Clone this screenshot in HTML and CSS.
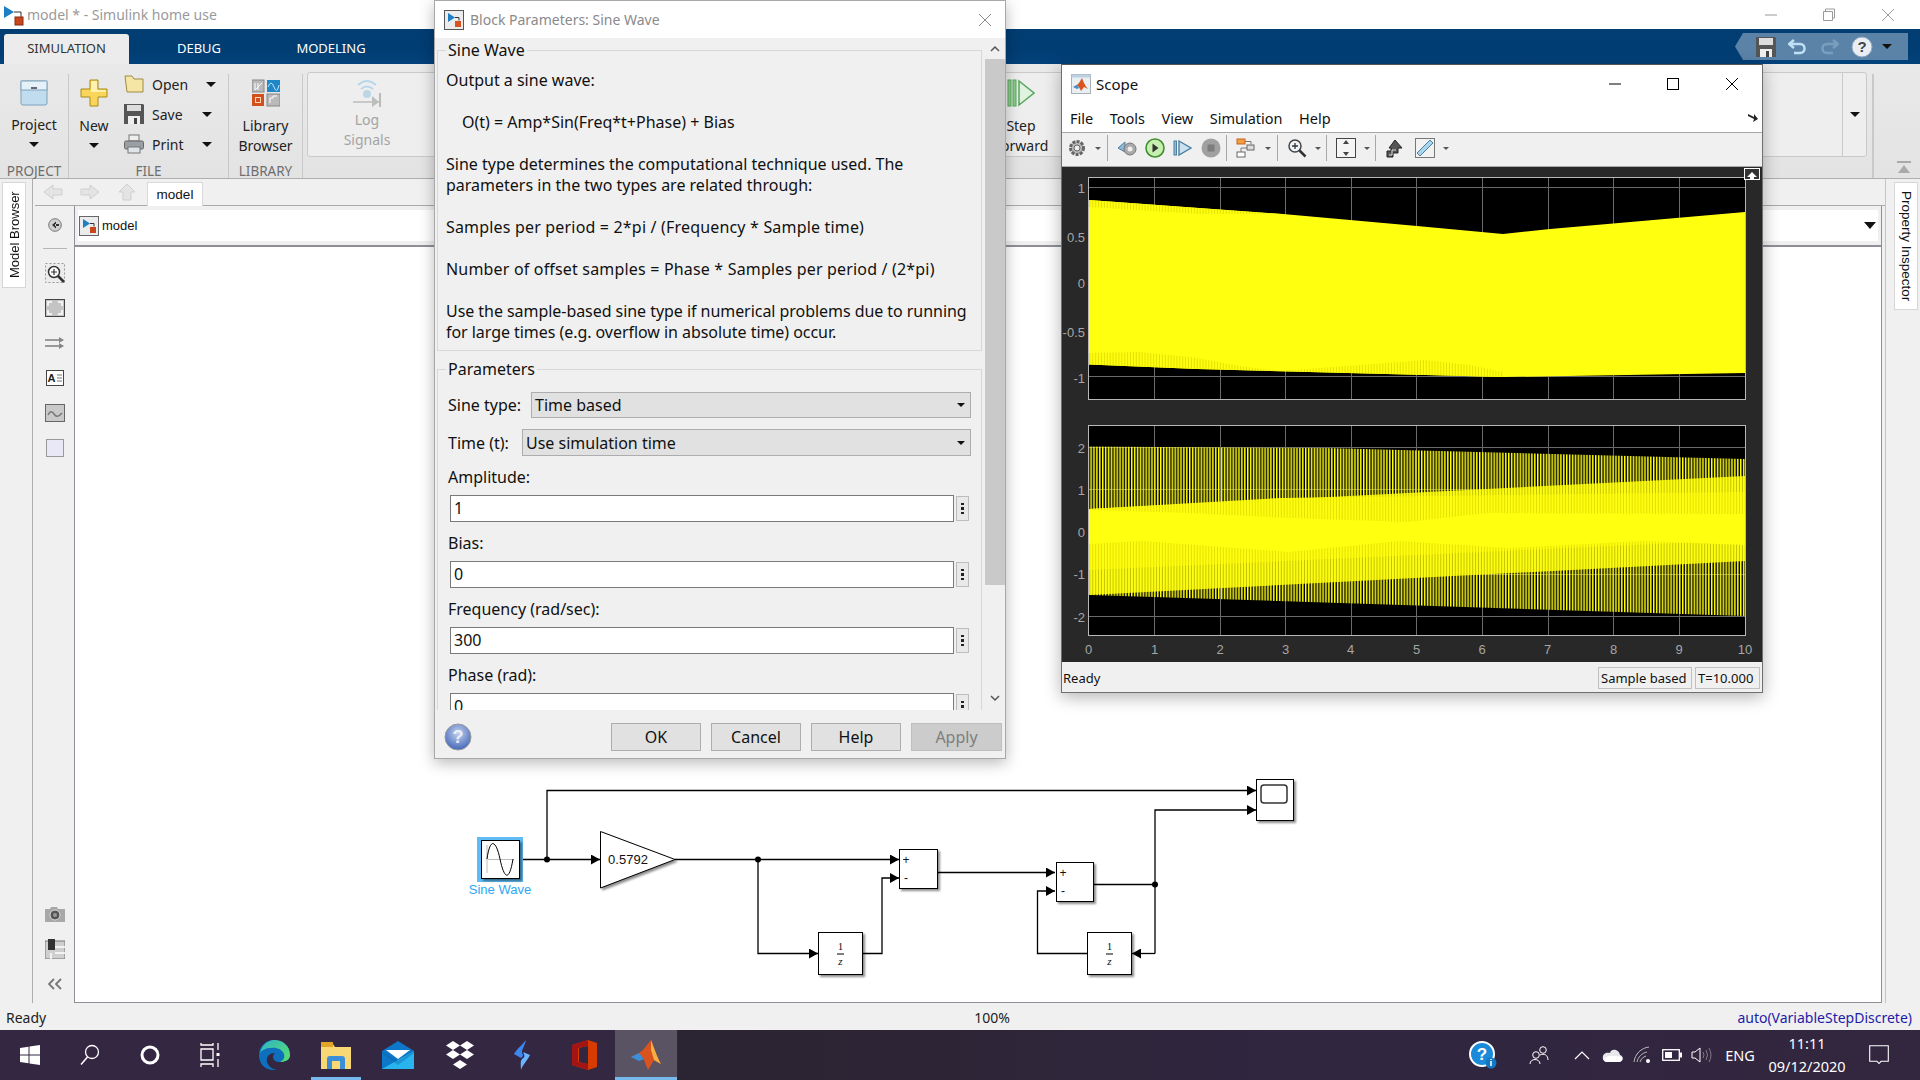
FILE: index.html
```html
<!DOCTYPE html>
<html lang="en">
<head>
<meta charset="utf-8">
<title>model * - Simulink home use</title>
<link rel="stylesheet" href="styles.css">
</head>
<body>
<div class="app">
  <header class="titlebar">
    <svg class="title-icon" width="22" height="22" viewBox="0 0 22 22"><path d="M2 2v12l10-6z" fill="#1f7fc4"/><path d="M12 8h7v6" fill="none" stroke="#333" stroke-width="1"/><rect x="13" y="13" width="8" height="8" fill="#c9451c" stroke="#8a2c10"/></svg>
    <span class="title-text">model * - Simulink home use</span>
    <div class="winctl">
      <span class="winbtn"><svg width="14" height="14" viewBox="0 0 14 14"><path d="M1 7h12" stroke="#9a9a9a"/></svg></span>
      <span class="winbtn"><svg width="14" height="14" viewBox="0 0 14 14"><path d="M3.5 3V1h9v9h-2M1.500 3.500h9v9h-9z" fill="none" stroke="#9a9a9a"/></svg></span>
      <span class="winbtn"><svg width="14" height="14" viewBox="0 0 14 14"><path d="M1 1l12 12M13 1L1 13" stroke="#9a9a9a"/></svg></span>
    </div>
  </header>

  <nav class="tabbar">
    <span class="rtab rtab-sim">SIMULATION</span>
    <span class="rtab rtab-debug">DEBUG</span>
    <span class="rtab rtab-model">MODELING</span>
    <div class="qat">
      <svg width="22" height="22" viewBox="0 0 22 22"><path d="M1 1h19l1 1v19H1z" fill="#555"/><rect x="4" y="2" width="14" height="7" fill="#ddd"/><rect x="5" y="13" width="12" height="8" fill="#eee"/><rect x="11" y="15" width="3" height="6" fill="#444"/></svg>
      <svg class="qat-undo" width="20" height="20" viewBox="0 0 20 20"><path d="M6 3L1 7l5 4M2 7h10c6 0 6 9 0 9H6" fill="none" stroke="#bfe0f5" stroke-width="2.500"/></svg>
      <svg class="qat-redo" width="20" height="20" viewBox="0 0 20 20"><path d="M14 3l5 4-5 4M18 7H8c-6 0-6 9 0 9h6" fill="none" stroke="#7a9fbe" stroke-width="2.500"/></svg>
      <svg class="qat-help" width="22" height="22" viewBox="0 0 22 22"><circle cx="11" cy="11" r="10" fill="#e9eef4" stroke="#8fa6bd"/><text x="11" y="16" class="qat-q">?</text></svg>
      <i class="caret caret-dark qat-caret"></i>
    </div>
  </nav>

  <section class="ribbon">
    <div class="rgroup rg-project">
      <div class="rgroup-body col-center">
        <svg class="big-icon" width="28" height="27" viewBox="0 0 28 27"><rect x="1" y="2" width="26" height="24" rx="2" fill="#c0dcee" stroke="#7fa2bb"/><rect x="1" y="2" width="26" height="9" fill="#e4f1f9" stroke="#7fa2bb"/><rect x="11" y="8" width="6" height="2" fill="#667"/></svg>
        <span class="rlabel">Project</span>
        <i class="caret caret-dark big-caret"></i>
      </div>
      <div class="group-name">PROJECT</div>
    </div>
    <i class="rsep"></i>
    <div class="rgroup rg-file">
      <div class="rgroup-body file-body">
        <div class="col-center new-col">
          <svg class="big-icon" width="28" height="28" viewBox="0 0 28 28"><path d="M10 1h8v9h9v8h-9v9h-8v-9H1v-8h9z" fill="#f9d65a" stroke="#a98a1a"/><path d="M11 2h6v9h9v2H11z" fill="#fff2b0"/></svg>
          <span class="rlabel">New</span>
          <i class="caret caret-dark big-caret"></i>
        </div>
        <div class="file-list">
          <div class="file-row"><svg width="20" height="18" viewBox="0 0 20 18"><path d="M1 1h7l2 3h9v13H3z" fill="#f6e6a6" stroke="#a08a45"/></svg><span class="file-label lbl-open">Open</span><i class="caret caret-dark"></i></div>
          <div class="file-row"><svg width="20" height="20" viewBox="0 0 20 20"><path d="M0 0h19l1 1v19H0z" fill="#555"/><rect x="3" y="1" width="14" height="6" fill="#ddd"/><rect x="4" y="12" width="12" height="8" fill="#eee"/><rect x="10" y="14" width="3" height="6" fill="#444"/></svg><span class="file-label lbl-save">Save</span><i class="caret caret-dark"></i></div>
          <div class="file-row"><svg width="20" height="20" viewBox="0 0 20 20"><rect x="5" y="1" width="10" height="6" fill="#eee" stroke="#777"/><rect x="0.500" y="7" width="19" height="8" rx="1.500" fill="#9a9fa6" stroke="#666"/><rect x="4" y="13" width="12" height="6" fill="#dfe4ea" stroke="#777"/></svg><span class="file-label lbl-save">Print</span><i class="caret caret-dark"></i></div>
        </div>
      </div>
      <div class="group-name">FILE</div>
    </div>
    <i class="rsep"></i>
    <div class="rgroup rg-lib">
      <div class="rgroup-body col-center">
        <svg class="big-icon" width="28" height="28" viewBox="0 0 28 28"><rect x="0" y="1" width="12" height="12" fill="#b9b9b9" stroke="#888"/><path d="M3 11V4M6 11V4M3 11l7-7" stroke="#fff" fill="none"/><rect x="15" y="1" width="13" height="12" fill="#1f86c7"/><path d="M16 8q3-8 6 0t5-2" stroke="#bfe6ff" fill="none"/><rect x="0" y="15" width="12" height="12" fill="#d2501e"/><rect x="3.500" y="18.500" width="5" height="5" fill="none" stroke="#fbd3b5"/><rect x="15" y="15" width="13" height="12" fill="#b9b9b9" stroke="#888"/><path d="M18 24v-5h3v-2h4" stroke="#fff" fill="none"/></svg>
        <span class="rlabel">Library</span>
        <span class="rlabel">Browser</span>
      </div>
      <div class="group-name">LIBRARY</div>
    </div>
    <i class="rsep"></i>
    <div class="sim-box">
      <div class="col-center log-col">
        <svg width="30" height="30" viewBox="0 0 30 30"><path d="M6 8q9-8 18 0M9 12q6-5 12 0" fill="none" stroke="#b9d7ea" stroke-width="2"/><circle cx="15" cy="17" r="4" fill="#bcd6e6"/><path d="M1 25h28" stroke="#bbb" stroke-width="1.500"/><path d="M20 19l7 6-7 5z" fill="#bdbdbd"/><path d="M28 16v14" stroke="#bbb" stroke-width="2"/></svg>
        <span class="rlabel muted log-l1">Log</span>
        <span class="rlabel muted">Signals</span>
      </div>
      <div class="col-center step-col">
        <svg class="step-icon" width="28" height="28" viewBox="0 0 28 28"><rect x="1" y="1" width="3" height="26" fill="#8ccc88" stroke="#58a660"/><rect x="6" y="1" width="3" height="26" fill="#8ccc88" stroke="#58a660"/><path d="M12 2l15 12-15 12z" fill="#e0f3de" stroke="#58a660" stroke-width="1.500"/></svg>
        <span class="rlabel">Step</span>
        <span class="rlabel">Forward</span>
      </div>
      <div class="box-fill"></div>
      <div class="box-more"><i class="caret caret-dark"></i></div>
    </div>
    <i class="rsep rsep-end"></i>
    <div class="collapse">
      <svg width="14" height="14" viewBox="0 0 14 14"><rect y="0" width="14" height="2" fill="#aaa"/><path d="M7 4l6 8H1z" fill="#aaa"/></svg>
    </div>
  </section>

  <main class="workarea">
    <aside class="rail-left"><span class="vtab vtab-up">Model Browser</span></aside>
    <div class="center">
      <div class="navrow">
        <svg width="20" height="16" viewBox="0 0 20 16"><path d="M10 1L1 8l9 7v-4h9V5h-9z" fill="#e4e4e4" stroke="#cfcfcf"/></svg>
        <svg width="20" height="16" viewBox="0 0 20 16"><path d="M10 1l9 7-9 7v-4H1V5h9z" fill="#e4e4e4" stroke="#cfcfcf"/></svg>
        <svg width="20" height="18" viewBox="0 0 20 18"><path d="M10 1l8 8h-4v8H6V9H2z" fill="#e4e4e4" stroke="#cfcfcf"/></svg>
        <span class="model-tab">model</span>
      </div>
      <div class="editor">
        <div class="palette">
          <span class="pal"><svg width="14" height="14" viewBox="0 0 14 14"><circle cx="7" cy="7" r="6.300" fill="#d0d0d0" stroke="#777"/><path d="M8 3.500L4 7l4 3.500zM7 6h4v2H7z" fill="#333"/></svg></span>
          <i class="pal-rule"></i>
          <span class="pal"><svg width="20" height="20" viewBox="0 0 20 20"><rect x="0.500" y="0.500" width="19" height="19" fill="#ececec" stroke="#999" stroke-dasharray="2 2"/><circle cx="9" cy="9" r="5.500" fill="#fff" stroke="#333" stroke-width="1.500"/><path d="M13 13l6 6" stroke="#333" stroke-width="2.500"/><path d="M9 6v6M6 9h6" stroke="#333" stroke-width="1.200"/></svg></span>
          <span class="pal"><svg width="20" height="18" viewBox="0 0 20 18"><rect x="0.500" y="0.500" width="19" height="17" fill="#c4c4c4" stroke="#444"/><path d="M3 7V3h4M13 3h4v4M3 11v4h4M17 11v4h-4" fill="none" stroke="#fff" stroke-width="1.500"/></svg></span>
          <span class="pal"><svg width="20" height="14" viewBox="0 0 20 14"><path d="M0 4h18M0 10h18" stroke="#444" stroke-width="1.200"/><path d="M14 1l5 3-5 3zM14 7l5 3-5 3z" fill="#888"/></svg></span>
          <span class="pal"><svg width="18" height="16" viewBox="0 0 18 16"><rect x="0.500" y="0.500" width="17" height="15" fill="#fff" stroke="#444"/><text x="5.500" y="12" class="pal-a">A</text><path d="M11 5h5M11 8h5M11 11h5" stroke="#777"/></svg></span>
          <span class="pal"><svg width="20" height="18" viewBox="0 0 20 18"><rect x="0.500" y="0.500" width="19" height="17" fill="#c9c9c9" stroke="#666"/><path d="M3 11q3-6 6-1t8-1" fill="none" stroke="#777" stroke-width="1.500"/></svg></span>
          <span class="pal"><svg width="18" height="18" viewBox="0 0 18 18"><rect x="0.500" y="0.500" width="17" height="17" fill="#e8e8f6" stroke="#999"/></svg></span>
          <div class="pal-fill"></div>
          <span class="pal"><svg width="20" height="16" viewBox="0 0 20 16"><path d="M0 3h5l1-2h6l1 2h7v13H0z" fill="#a8a8a8"/><circle cx="10" cy="9" r="5" fill="#555" stroke="#ddd"/><circle cx="10" cy="9" r="2" fill="#999"/></svg></span>
          <span class="pal"><svg width="20" height="20" viewBox="0 0 20 20"><rect y="2" width="20" height="18" fill="#cfcfcf" stroke="#777"/><rect x="3" width="7" height="11" fill="#333"/><path d="M10 8h10M10 14h10M6 14v6" stroke="#fff" stroke-width="1.500"/></svg></span>
          <span class="pal"><svg width="14" height="12" viewBox="0 0 14 12"><path d="M6 1L1 6l5 5M13 1L8 6l5 5" fill="none" stroke="#777" stroke-width="1.800"/></svg></span>
        </div>
        <div class="frame">
          <div class="crumbs">
            <div class="crumbs-inner">
              <svg width="20" height="20" viewBox="0 0 20 20"><rect x="0.500" y="0.500" width="19" height="19" fill="#ececec" stroke="#666"/><path d="M4 3v9l7-4.500z" fill="#1f7fc4"/><path d="M11 7.500h4v3" fill="none" stroke="#333"/><rect x="11" y="11" width="6" height="6" fill="#c9451c"/></svg>
              <span class="crumb-text">model</span>
              <i class="caret caret-dark crumb-caret"></i>
            </div>
          </div>
          <div class="canvas">
            <svg class="diagram" width="1806" height="755" viewBox="75 247 1806 755">
              <defs>
                <marker id="ah" markerWidth="9" markerHeight="10" refX="9" refY="5" orient="auto" markerUnits="userSpaceOnUse"><path d="M0 0l9 5-9 5z" fill="#000"/></marker>
              </defs>
              <g class="wires">
                <path d="M519 859.500H600" marker-end="url(#ah)"/>
                <path d="M547 859.500V790.500H1256" marker-end="url(#ah)"/>
                <path d="M675 859.500H899" marker-end="url(#ah)"/>
                <path d="M758 859.500V953.500H818" marker-end="url(#ah)"/>
                <path d="M863 953.500H882V878H899" marker-end="url(#ah)"/>
                <path d="M938 872.500H1055" marker-end="url(#ah)"/>
                <path d="M1094 884.500H1155" />
                <path d="M1155 953.500V810H1256" marker-end="url(#ah)"/>
                <path d="M1155 953.500H1132" marker-end="url(#ah)"/>
                <path d="M1087 953.500H1037.500V891H1055" marker-end="url(#ah)"/>
              </g>
              <g class="dots">
                <circle cx="547" cy="859.500" r="3"/><circle cx="758" cy="859.500" r="3"/><circle cx="1155" cy="884.500" r="3"/>
              </g>
              <rect x="477" y="837" width="46" height="45" fill="#5fbcf5"/>
              <g class="block">
                <rect x="481.500" y="840.500" width="38" height="38"/>
                <path d="M600.500 831.500L675 859.500 600.500 888z"/>
                <rect x="899.500" y="849.500" width="38" height="39"/>
                <rect x="1056.500" y="862.500" width="37" height="39"/>
                <rect x="818.500" y="932.500" width="44" height="42"/>
                <rect x="1087.500" y="932.500" width="44" height="42"/>
                <rect x="1256.500" y="779.500" width="37" height="41"/>
              </g>
              <path d="M488 859.500h26M487 845v28" stroke="#bbb" fill="none"/>
              <path d="M487 859c3-22 9-19 13 0s9 24 13 0" fill="none" stroke="#000"/>
              <rect x="1261" y="785" width="26" height="18" rx="3" fill="#fff" stroke="#333" stroke-width="1.500"/>
              <text x="500" y="893.500" class="t-sel">Sine Wave</text>
              <text x="628" y="864" class="t-gain">0.5792</text>
              <text x="906" y="864" class="t-sign">+</text><text x="906" y="882" class="t-sign">-</text>
              <text x="1063" y="876.500" class="t-sign">+</text><text x="1063" y="895" class="t-sign">-</text>
              <text x="840.500" y="950" class="t-z">1</text><path d="M837 954h7" stroke="#000"/><text x="840.500" y="965" class="t-z t-zi">z</text>
              <text x="1109.500" y="950" class="t-z">1</text><path d="M1106 954h7" stroke="#000"/><text x="1109.500" y="965" class="t-z t-zi">z</text>
            </svg>
          </div>
        </div>
      </div>
    </div>
    <aside class="rail-right"><span class="vtab vtab-down">Property Inspector</span></aside>
  </main>

  <footer class="statusbar">
    <span>Ready</span>
    <span class="st-zoom">100%</span>
    <span class="st-solver">auto(VariableStepDiscrete)</span>
  </footer>

  <div class="taskbar">
    <span class="tk"><svg width="20" height="20" viewBox="0 0 20 20"><path d="M0 3l8.500-1.300V9.500H0zM9.500 1.500L20 0v9.500H9.500zM0 10.500h8.500v7.800L0 17zM9.500 10.500H20V20L9.500 18.500z" fill="#fff"/></svg></span>
    <span class="tk"><svg width="20" height="22" viewBox="0 0 20 22"><circle cx="12" cy="8" r="6.500" fill="none" stroke="#fff" stroke-width="1.300"/><path d="M7.500 13L1 20.500" stroke="#fff" stroke-width="1.500"/></svg></span>
    <span class="tk"><svg width="20" height="20" viewBox="0 0 20 20"><circle cx="10" cy="10" r="8" fill="none" stroke="#fff" stroke-width="3"/></svg></span>
    <span class="tk"><svg width="20" height="26" viewBox="0 0 20 26"><path d="M1 1v2h12V1M1 25v-3h12v3M1 7h12v11H1zM18 1v7M18 17v8" fill="none" stroke="#fff" stroke-width="1.300"/><rect x="16.500" y="11" width="3" height="3" fill="#fff"/></svg></span>
    <i class="tk-gap"></i>
    <span class="tk tk-pin"><svg width="32" height="30" viewBox="0 0 32 30"><defs><linearGradient id="eg" x1="0" y1="0" x2="1" y2="1"><stop offset="0" stop-color="#2fb5c7"/><stop offset="1" stop-color="#5be06a"/></linearGradient></defs><path d="M1 15C1 6 8 0 16 0c9 0 16 6 16 15 0 5-5 7-10 7-4 0-7-2-7-5 0-2 1-3 2-4-6 0-9 4-8 9 1 4 5 7 10 8C8 31 1 25 1 15z" fill="#0e6fbd"/><path d="M2 13C4 5 10 0 16 0c9 0 16 6 16 15 0 5-5 7-10 7 4-2 5-5 4-8-2-5-8-7-13-6-5 0-9 2-11 5z" fill="url(#eg)"/></svg></span>
    <span class="tk tk-pin tk-run"><svg width="30" height="27" viewBox="0 0 30 27"><path d="M0 2h12l2 3h16v22H0z" fill="#f8d775"/><rect x="0" y="0" width="12" height="5" fill="#e0a526"/><path d="M6 27V17q0-3 3-3h12q3 0 3 3v10h-5v-8h-8v8z" fill="#3a8fd8"/></svg></span>
    <span class="tk tk-pin"><svg width="32" height="28" viewBox="0 0 32 28"><path d="M0 10L16 0l16 10v18H0z" fill="#0d78c9"/><path d="M4 9h24L16 18z" fill="#fff"/><path d="M0 28l32-18v18z" fill="#28b4ee"/><path d="M0 10l16 10 16-10v2L16 24 0 12z" fill="#0f62a8" opacity=".4"/></svg></span>
    <span class="tk tk-pin"><svg width="30" height="28" viewBox="0 0 30 28"><path d="M8 0l7 4.500L8 9 1 4.500zM22 0l7 4.500L22 9l-7-4.500zM8 9l7 4.500L8 18l-7-4.500zM22 9l7 4.500-7 4.500-7-4.500zM15 19l7 4.500-7 4.500-7-4.500z" fill="#fff"/></svg></span>
    <span class="tk tk-pin"><svg width="18" height="30" viewBox="0 0 18 30"><path d="M13 0C10 4 3 10 1 14l7 4c3-2 2-4 1-5-1-2 3-8 4-13z" fill="#3d88f0"/><path d="M8 30c1-4 6-9 9-15l-7-3c2 4 2 5-1 7-2 2-1 7-1 11z" fill="#69b5ff"/></svg></span>
    <span class="tk tk-pin"><svg width="25" height="30" viewBox="0 0 25 30"><path d="M16 0l9 3v24l-9 3-16-5V5z" fill="#d83b01"/><path d="M16 0L0 5v20l16 5V24L6 22V8l10-2z" fill="#a31515"/><path d="M16 6l-9 2v14l9 2z" fill="#332640"/></svg></span>
    <span class="tk tk-pin tk-active"><svg width="30" height="30" viewBox="0 0 30 30"><path d="M0 17l8-4 4-3 8-10c2 5 6 17 10 24l-7-4-6 10c-2-5-4-11-6-13z" fill="#d9531e"/><path d="M20 0c2 5 6 17 10 24l-7-4-3-10z" fill="#f4b042"/><path d="M0 17l8-4 5 6-5 2z" fill="#3a8fd8"/></svg></span>
    <div class="tray">
      <span class="tr tr54"><svg width="28" height="28" viewBox="0 0 28 28"><circle cx="13" cy="13" r="12" fill="#1b8ad8" stroke="#fff" stroke-width="2"/><text x="13" y="19" class="tray-q">?</text><circle cx="22" cy="22" r="5.500" fill="#1278c4"/><path d="M22 20v5M22 18v1" stroke="#fff" stroke-width="1.500"/></svg></span>
      <span class="tr tr57"><svg width="20" height="20" viewBox="0 0 20 20"><circle cx="7" cy="10" r="3.300" fill="none" stroke="#fff"/><path d="M1 19c0-6 10-6 10 0" fill="none" stroke="#fff"/><circle cx="14" cy="5" r="3.300" fill="none" stroke="#fff"/><path d="M11 10c4-2 8 0 8 5" fill="none" stroke="#fff"/></svg></span>
      <span class="tr tr30"><svg width="16" height="10" viewBox="0 0 16 10"><path d="M1 9l7-7 7 7" fill="none" stroke="#fff" stroke-width="1.200"/></svg></span>
      <span class="tr tr30"><svg width="21" height="15" viewBox="0 0 21 15"><path d="M5 14h12c5 0 5-6 1-7C17 1 9 0 8 5 3 4 0 7 1 11c1 2 2 3 4 3z" fill="#e8e8ea"/><path d="M1 11c5-5 14-3 19-2 0 3-1 5-3 5H5c-2 0-3-1-4-3z" fill="#fff"/></svg></span>
      <span class="tr tr30"><svg width="18" height="18" viewBox="0 0 18 18"><path d="M1 16C2 8 8 2 16 1M4 16c1-5 5-9 10-10M7 16c1-3 3-5 6-6" fill="none" stroke="#bbb"/><circle cx="15" cy="15" r="2" fill="#fff"/></svg></span>
      <span class="tr tr30"><svg width="20" height="12" viewBox="0 0 20 12"><rect x="0.700" y="0.700" width="16.600" height="10.600" fill="none" stroke="#fff" stroke-width="1.300"/><rect x="3" y="3" width="7" height="6" fill="#fff"/><rect x="18" y="3.500" width="2" height="5" fill="#fff"/></svg></span>
      <span class="tr tr30"><svg width="22" height="16" viewBox="0 0 22 16"><path d="M1 5h3l5-4v14l-5-4H1z" fill="none" stroke="#fff"/><path d="M12 5q2 3 0 6M15 3q3 5 0 10M18 1q4 7 0 14" fill="none" stroke="#7f7a88"/></svg></span>
      <span class="tr tr46 tray-text">ENG</span>
      <span class="tr tr88 clock"><span>11:11</span><span>09/12/2020</span></span>
      <span class="tr tr56"><svg width="20" height="20" viewBox="0 0 20 20"><path d="M.7.7h18.600v15.600h-7.300L10 18.500 8 16.300H.7z" fill="none" stroke="#fff" stroke-width="1.100"/></svg></span>
    </div>
  </div>

  <section class="dialog">
    <div class="dlg-title">
      <svg width="20" height="20" viewBox="0 0 20 20"><rect x="0.500" y="0.500" width="19" height="19" fill="#ececec" stroke="#555"/><path d="M4 3v9l7-4.500z" fill="#1f7fc4"/><path d="M11 7.500h4v3" fill="none" stroke="#333"/><rect x="11" y="11" width="6" height="6" fill="#d9531e"/></svg>
      <span class="dlg-title-text">Block Parameters: Sine Wave</span>
      <svg class="dlg-close" width="14" height="14" viewBox="0 0 14 14"><path d="M1 1l12 12M13 1L1 13" stroke="#8a8a8a"/></svg>
    </div>
    <div class="dlg-body">
      <div class="dlg-scroll">
        <fieldset class="fs">
          <legend>Sine Wave</legend>
          <div class="desc">
            <p>Output a sine wave:</p>
            <p class="indent">O(t) = Amp*Sin(Freq*t+Phase) + Bias</p>
            <p>Sine type determines the computational technique used. The<br>parameters in the two types are related through:</p>
            <p class="wide">Samples per period = 2*pi / (Frequency * Sample time)</p>
            <p class="wide">Number of offset samples = Phase * Samples per period / (2*pi)</p>
            <p class="tight">Use the sample-based sine type if numerical problems due to running<br>for large times (e.g. overflow in absolute time) occur.</p>
          </div>
        </fieldset>
        <fieldset class="fs fs-params">
          <legend>Parameters</legend>
          <div class="combo-row row-sine"><label class="lbl-sine">Sine type:</label><div class="combo"><span>Time based</span><i class="caret caret-dark caret-sm"></i></div></div>
          <div class="combo-row row-time"><label class="lbl-time">Time (t):</label><div class="combo"><span>Use simulation time</span><i class="caret caret-dark caret-sm"></i></div></div>
          <div class="param"><label>Amplitude:</label><div class="param-field"><div class="input">1</div><span class="ell"><i></i><i></i><i></i></span></div></div>
          <div class="param"><label>Bias:</label><div class="param-field"><div class="input">0</div><span class="ell"><i></i><i></i><i></i></span></div></div>
          <div class="param"><label>Frequency (rad/sec):</label><div class="param-field"><div class="input">300</div><span class="ell"><i></i><i></i><i></i></span></div></div>
          <div class="param"><label>Phase (rad):</label><div class="param-field"><div class="input">0</div><span class="ell"><i></i><i></i><i></i></span></div></div>
        </fieldset>
      </div>
      <div class="scrollbar">
        <div class="sb-btn"><svg width="10" height="7" viewBox="0 0 10 7"><path d="M1 6l4-4 4 4" fill="none" stroke="#555" stroke-width="1.500"/></svg></div>
        <div class="sb-thumb"></div>
        <div class="sb-rest"><svg width="10" height="7" viewBox="0 0 10 7"><path d="M1 1l4 4 4-4" fill="none" stroke="#555" stroke-width="1.500"/></svg></div>
      </div>
    </div>
    <div class="dlg-foot">
      <svg width="28" height="28" viewBox="0 0 28 28"><defs><radialGradient id="hg" cx=".5" cy=".35" r=".7"><stop offset="0" stop-color="#c5d3ee"/><stop offset="1" stop-color="#3a5fb5"/></radialGradient></defs><circle cx="14" cy="14" r="13" fill="url(#hg)" stroke="#9a9a9a"/><text x="14" y="20" class="help-q">?</text></svg>
      <div class="dlg-btns">
        <button class="btn">OK</button>
        <button class="btn">Cancel</button>
        <button class="btn">Help</button>
        <button class="btn btn-off">Apply</button>
      </div>
    </div>
  </section>

  <section class="scope">
    <div class="sc-title">
      <svg width="20" height="20" viewBox="0 0 20 20"><rect x="0.500" y="0.500" width="19" height="19" fill="#e9eef3" stroke="#a8b0b8"/><rect x="0.500" y="0.500" width="19" height="3" fill="#bcd0e2"/><path d="M2 13l4-2 2-2 3-5c1 3 3 8 6 11l-4-2-3 4c-1-2-2-4-3-5z" fill="#d9531e"/><path d="M2 13l4-2 2 3-2 1z" fill="#3a8fd8"/></svg>
      <span class="sc-title-text">Scope</span>
      <div class="sc-ctl">
        <span class="sc-btn"><svg width="14" height="14" viewBox="0 0 14 14"><path d="M1 7h12" stroke="#000"/></svg></span>
        <span class="sc-btn"><svg width="14" height="14" viewBox="0 0 14 14"><rect x="1.500" y="1.500" width="11" height="11" fill="none" stroke="#000"/></svg></span>
        <span class="sc-btn"><svg width="14" height="14" viewBox="0 0 14 14"><path d="M1 1l12 12M13 1L1 13" stroke="#000"/></svg></span>
      </div>
    </div>
    <div class="sc-menu">
      <span>File</span><span>Tools</span><span>View</span><span>Simulation</span><span>Help</span>
      <svg class="sc-dock" width="12" height="10" viewBox="0 0 12 10"><path d="M1 1l6 3V1l4 5-5 3 1-3-6-3z" fill="#222"/></svg>
    </div>
    <div class="sc-tools">
      <span class="tb tb-first"><svg width="18" height="18" viewBox="0 0 18 18"><circle cx="9" cy="9" r="6.500" fill="#bbb" stroke="#666" stroke-width="3" stroke-dasharray="3 1.200"/><circle cx="9" cy="9" r="3" fill="#eee" stroke="#666"/></svg></span><span class="tbc tbc17"><i class="caret caret-sm2"></i></span><i class="tb-sep"></i>
      <span class="tb"><svg width="20" height="18" viewBox="0 0 20 18"><path d="M8 3L1 9l7 4z" fill="#8fb9d5" stroke="#4d7f9f"/><circle cx="13" cy="10" r="6" fill="#aaa" stroke="#777"/><circle cx="13" cy="10" r="2.500" fill="#eee"/></svg></span>
      <span class="tb"><svg width="20" height="20" viewBox="0 0 20 20"><circle cx="10" cy="10" r="9" fill="#c7efb0" stroke="#3f8f2d" stroke-width="1.600"/><path d="M7.500 5.500l6 4.500-6 4.500z" fill="#333"/></svg></span>
      <span class="tb"><svg width="20" height="18" viewBox="0 0 20 18"><rect x="1" y="2" width="2.500" height="14" fill="#8fb9d5" stroke="#4d7f9f"/><path d="M6 2l12 7-12 7z" fill="#c9e1f1" stroke="#4d7f9f" stroke-width="1.400"/></svg></span>
      <span class="tb"><svg width="20" height="20" viewBox="0 0 20 20"><circle cx="10" cy="10" r="9.500" fill="#a0a0a0"/><rect x="6.500" y="6.500" width="7" height="7" fill="#7d7d7d"/></svg></span>
      <i class="tb-sep sep-tight"></i>
      <span class="tb"><svg width="20" height="20" viewBox="0 0 20 20"><rect x="1" y="1" width="8" height="5" fill="#f0a040" stroke="#c9601a"/><rect x="1" y="14" width="8" height="5" fill="#fff" stroke="#666"/><rect x="11" y="7" width="7" height="5" fill="#ddd" stroke="#666"/><path d="M9 3.500h6v3M11 10H5v4" fill="none" stroke="#777"/></svg></span><span class="tbc tbc16"><i class="caret caret-sm2"></i></span><i class="tb-sep"></i>
      <span class="tb"><svg width="20" height="20" viewBox="0 0 20 20"><circle cx="8" cy="8" r="6" fill="#eef6fb" stroke="#444" stroke-width="1.500"/><path d="M12.500 12.500l6 6" stroke="#333" stroke-width="2.500"/><path d="M8 5v6M5 8h6" stroke="#333" stroke-width="1.300"/></svg></span><span class="tbc tbc14"><i class="caret caret-sm2"></i></span><i class="tb-sep"></i>
      <span class="tb"><svg width="20" height="20" viewBox="0 0 20 20"><rect x="0.500" y="0.500" width="19" height="19" fill="#f5f5f5" stroke="#444"/><path d="M10 2l3 4H7zM10 18l-3-4h6z" fill="#444"/></svg></span><span class="tbc tbc14"><i class="caret caret-sm2"></i></span><i class="tb-sep"></i>
      <span class="tb"><svg width="18" height="20" viewBox="0 0 18 20"><path d="M1 19v-6h4v-3H3l6-8 7 8h-4v5H7v4z" fill="#555" stroke="#222"/><path d="M3 17h3v-5h4" fill="none" stroke="#ddd"/></svg></span>
      <span class="tb tb-ruler"><svg width="20" height="20" viewBox="0 0 20 20"><rect x="0.500" y="0.500" width="19" height="19" fill="#f2f2f2" stroke="#777"/><path d="M2 15L15 2l3 3L5 18z" fill="#a8d4ee" stroke="#4d7f9f"/></svg></span><span class="tbc tbc14"><i class="caret caret-sm2"></i></span>
    </div>
    <div class="sc-plot">
      <svg class="plot" width="700" height="495" viewBox="1062 167 700 495">
        <defs>
          <pattern id="darkst" width="2.900" height="10" patternUnits="userSpaceOnUse"><rect width="1.500" height="10" fill="#ffff10"/></pattern>
          <pattern id="midst" width="2.900" height="10" patternUnits="userSpaceOnUse"><rect width="2.900" height="10" fill="#ffff10"/><rect x="1.900" width="1" height="10" fill="#c4c100"/></pattern>
          <pattern id="lightst" width="2.900" height="10" patternUnits="userSpaceOnUse"><rect width="2.900" height="10" fill="#ffff10"/><rect x="1.900" width="1" height="10" fill="#e4df00"/></pattern>
        </defs>
        <rect x="1088.500" y="177.500" width="657" height="222" fill="#000"/>
        <rect x="1088.500" y="425.500" width="657" height="210" fill="#000"/>
        <g class="grid">
          <path d="M1154.500 177V399M1220.500 177V399M1285.500 177V399M1351.500 177V399M1416.500 177V399M1482.500 177V399M1548.500 177V399M1613.500 177V399M1679.500 177V399"/>
          <path d="M1089 187.500H1745M1089 234.500H1745M1089 282.500H1745M1089 329.500H1745M1089 376.500H1745"/>
          <path d="M1154.500 425V635M1220.500 425V635M1285.500 425V635M1351.500 425V635M1416.500 425V635M1482.500 425V635M1548.500 425V635M1613.500 425V635M1679.500 425V635"/>
          <path d="M1089 447.500H1745M1089 489.500H1745M1089 532.500H1745M1089 574.500H1745M1089 616.500H1745"/>
        </g>
        <path d="M1089 200L1283 214 1417 226 1503 234 1550 229 1745 212V373L1503 377 1197 369 1089 364.500z" fill="#ffff10"/>
        <path d="M1089 200L1280 214 1200 214 1089 207z" fill="url(#lightst)"/>
        <path d="M1089 353L1140 352 1197 358 1240 366 1280 371 1400 362 1425 360 1470 365 1503 372 1503 377 1197 369 1089 364.500z" fill="url(#lightst)"/>
        <path d="M1089 446.500L1325 448 1745 459V616L1089 595z" fill="url(#darkst)"/>
        <path d="M1089 509L1745 476V561L1089 595z" fill="url(#midst)"/>
        <path d="M1089 509L1280 498 1745 492V540L1089 570z" fill="url(#lightst)"/>
        <path d="M1089 510L1188 513 1290 518 1408 522 1486 513 1745 514V545L1642 541 1509 548 1399 541 1289 552 1142 541 1089 544z" fill="#ffff10"/>
        <rect x="1088.500" y="177.500" width="657" height="222" class="axbox"/>
        <rect x="1088.500" y="425.500" width="657" height="210" class="axbox"/>
        <g class="ylab">
          <text x="1085" y="192.500">1</text><text x="1085" y="241.500">0.5</text><text x="1085" y="288">0</text><text x="1085" y="336.500">-0.5</text><text x="1085" y="383">-1</text>
          <text x="1085" y="452.500">2</text><text x="1085" y="495">1</text><text x="1085" y="537">0</text><text x="1085" y="579">-1</text><text x="1085" y="622">-2</text>
        </g>
        <g class="xlab">
          <text x="1088.500" y="654">0</text><text x="1154.500" y="654">1</text><text x="1220" y="654">2</text><text x="1285.500" y="654">3</text><text x="1350.500" y="654">4</text><text x="1416.500" y="654">5</text><text x="1482" y="654">6</text><text x="1547.500" y="654">7</text><text x="1613.500" y="654">8</text><text x="1679" y="654">9</text><text x="1745" y="654">10</text>
        </g>
        <rect x="1744.500" y="168.500" width="15" height="11" fill="#333" stroke="#fff"/>
        <path d="M1747 177l5-5 5 5h-3v2h-4v-2z" fill="#fff"/>
      </svg>
    </div>
    <div class="sc-status">
      <span>Ready</span>
      <span class="sc-cell cell-a">Sample based</span>
      <span class="sc-cell cell-b">T=10.000</span>
    </div>
  </section>
</div>
</body>
</html>
```

FILE: styles.css
```css
* { box-sizing: border-box; }
html, body { margin: 0; padding: 0; }
body { width: 1920px; height: 1080px; overflow: hidden; background: #fff; font-family: "Noto Sans", "Liberation Sans", sans-serif; color: #111; }
i { display: block; font-style: normal; }
svg { display: block; flex: none; }

.app { position: relative; width: 1920px; height: 1080px; display: flex; flex-direction: column; }

/* window title */
.titlebar { height: 29px; background: #fff; display: flex; align-items: center; flex: none; }
.title-icon { margin-left: 2px; }
.title-text { margin-left: 3px; font-size: 14px; color: #9a9a9a; }
.winctl { margin-left: auto; margin-right: 3px; display: flex; }
.winbtn { width: 58.500px; display: flex; justify-content: center; }

/* ribbon tabs */
.tabbar { height: 35px; flex: none; background: linear-gradient(#023e72, #003d73 60%, #04427b); display: flex; align-items: flex-end; padding-left: 4px; position: relative; }
.rtab { height: 30px; display: flex; align-items: center; justify-content: center; font-size: 13px; color: #fff; padding-bottom: 2px; }
.rtab-sim { width: 125px; background: #ececec; color: #333; border-radius: 3px 3px 0 0; }
.rtab-debug { width: 140px; }
.rtab-model { width: 124px; }
.qat { margin-left: auto; margin-right: 12px; margin-bottom: 4px; height: 27px; width: 173px; background: #5b83a8; display: flex; align-items: center; padding-left: 20px; clip-path: polygon(0 50%, 8px 0, 100% 0, 100% 100%, 8px 100%); }
.qat-undo { margin-left: 11px; }
.qat-redo { margin-left: 11px; }
.qat-help { margin-left: 12px; }
.qat-q { font: bold 15px "Liberation Sans", sans-serif; fill: #444; text-anchor: middle; }
.qat-caret { margin-left: 9px; }

.caret { width: 0; height: 0; border-left: 5px solid transparent; border-right: 5px solid transparent; border-top: 5px solid #111; flex: none; }
.caret-sm { border-left-width: 4px; border-right-width: 4px; border-top-width: 4px; }
.caret-sm2 { border-left-width: 3.500px; border-right-width: 3.500px; border-top-width: 3.500px; border-top-color: #555; }

/* ribbon */
.ribbon { height: 115px; flex: none; background: linear-gradient(#e9e9e9, #e3e3e3); display: flex; padding-top: 6px; border-bottom: 1px solid #aeaeae; }
.rgroup { display: flex; flex-direction: column; }
.rgroup-body { flex: 1; }
.rg-project { width: 68px; }
.rg-file { width: 159px; }
.rg-lib { width: 73px; }
.rsep { width: 1px; background: #c9c9c9; margin-top: 4px; flex: none; }
.group-name { height: 16px; line-height: 16px; font-size: 13.500px; color: #6e6e6e; text-align: center; margin-bottom: -1px; }
.col-center { display: flex; flex-direction: column; align-items: center; }
.big-icon { margin-top: 9px; margin-bottom: 9px; }
.rlabel { font-size: 14px; line-height: 20px; color: #222; white-space: nowrap; }
.big-caret { margin-top: 7px; }
.file-body { display: flex; }
.new-col { width: 44px; margin-left: 3px; }
.file-list { margin-left: 8px; margin-top: -1px; display: flex; flex-direction: column; }
.file-row { height: 30px; display: flex; align-items: center; }
.file-label { margin-left: 8px; font-size: 14px; color: #222; }
.lbl-open { width: 54px; }
.lbl-save { width: 50px; }
.sim-box { margin: 2px 0 6px 4px; width: 1560px; flex: none; height: 85px; border: 1px solid #cacaca; border-radius: 3px; background: #eeeeee; display: flex; }
.log-col { width: 118px; padding-top: 4px; }
.muted { color: #a4a4a4; }
.log-l1 { margin-top: 3px; }
.step-col { width: 80px; margin-left: 555px; }
.step-icon { margin-top: 6px; margin-bottom: 9px; }
.box-fill { flex: 1; }
.box-more { width: 24px; border-left: 1px solid #cacaca; display: flex; align-items: center; justify-content: center; }
.rsep-end { margin-left: 5px; margin-top: 4px; width: 2px; }
.collapse { flex: 1; display: flex; justify-content: center; align-items: flex-end; padding: 0 0 3px 14px; }

/* work area */
.workarea { flex: 1; display: flex; min-height: 0; background: #f0f0f0; }
.rail-left { width: 33px; flex: none; border-right: 1px solid #adadad; padding: 3px 0 0 2px; }
.rail-right { width: 35px; flex: none; border-left: 1px solid #c4c4c4; padding: 3px 0 0 8px; }
.vtab { display: flex; align-items: center; justify-content: center; width: 24px; background: #fff; border: 1px solid #d6d6d6; writing-mode: vertical-rl; font-family: "Liberation Sans", sans-serif; color: #111; }
.vtab-up { height: 106px; font-size: 13px; transform: rotate(180deg); }
.vtab-down { height: 128px; font-size: 13.500px; }
.center { flex: 1; min-width: 0; display: flex; flex-direction: column; padding-left: 2px; }
.navrow { height: 27px; flex: none; display: flex; align-items: center; padding-left: 8px; gap: 17px; border-bottom: 1px solid #a9a9a9; }
.model-tab { width: 56px; height: 24px; margin-top: 3px; margin-left: -7px; background: #fff; border: 1px solid #d9d9d9; border-bottom: 0; font: 13.500px "Liberation Sans", sans-serif; display: flex; align-items: center; justify-content: center; }
.editor { flex: 1; display: flex; min-height: 0; padding-right: 3px; }
.palette { width: 39px; flex: none; display: flex; flex-direction: column; align-items: center; padding: 1.500px 0; }
.pal { height: 35px; flex: none; display: flex; align-items: center; justify-content: center; }
.pal-rule { height: 1px; width: 24px; background: #b5b5b5; margin: 5px 0 7px; flex: none; }
.pal-fill { flex: 1; }
.pal-a { font: bold 11px "Liberation Sans", sans-serif; fill: #222; text-anchor: middle; }
.frame { flex: 1; min-width: 0; display: flex; flex-direction: column; border-left: 1px solid #8f8f9a; border-right: 1px solid #8f8f9a; border-bottom: 1px solid #8f8f9a; }
.crumbs { height: 41px; flex: none; background: #f0f0f0; padding: 4px 3px; border-bottom: 2px solid #8f8f9a; }
.crumbs-inner { height: 31px; background: #fff; display: flex; align-items: center; padding-left: 1px; }
.crumb-text { margin-left: 3px; font: 13px "Liberation Sans", sans-serif; color: #111; }
.crumb-caret { margin-left: auto; margin-right: 2px; border-left-width: 6px; border-right-width: 6px; border-top-width: 7px; }
.canvas { flex: 1; min-height: 0; background: #fff; overflow: hidden; }

/* diagram */
.wires path { fill: none; stroke: #000; stroke-width: 1.300; }
.dots circle { fill: #000; }
.block rect, .block path { fill: #fff; stroke: #000; stroke-width: 1; filter: drop-shadow(2px 2px 1px rgba(0,0,0,.45)); }
.t-sel { font: 13px "Liberation Sans", sans-serif; fill: #2ea8f5; text-anchor: middle; }
.t-gain { font: 13px "Liberation Sans", sans-serif; fill: #111; text-anchor: middle; }
.t-sign { font: 12px "Liberation Sans", sans-serif; fill: #111; text-anchor: middle; }
.t-z { font: 11px "Liberation Serif", serif; fill: #111; text-anchor: middle; }
.t-zi { font-style: italic; }

/* status bar */
.statusbar { height: 27px; flex: none; background: #f0f0f0; display: grid; grid-template-columns: 954px 64px 1fr; align-items: center; padding: 2px 8px 0 6px; font-size: 14px; color: #222; }
.st-zoom { text-align: center; }
.st-solver { justify-self: end; color: #1c1ca8; font-size: 14px; }

/* taskbar */
.taskbar { height: 50px; flex: none; display: flex; align-items: stretch; background: linear-gradient(90deg, #342742 0, #342742 677px, #2b2432 678px, #2d2535 900px, #302640 1300px, #33263f 100%); }
.tk { width: 60px; display: flex; align-items: center; justify-content: center; position: relative; }
.tk-gap { width: 3px; }
.tk-pin { width: 62px; }
.tk-run::after, .tk-active::after { content: ""; position: absolute; left: 6px; right: 6px; bottom: 0; height: 3px; background: #76b9ed; }
.tk-active { background: #5a5364; }
.tk-active::after { left: 0; right: 0; }
.tray { margin-left: auto; padding-right: 13px; display: flex; align-items: center; color: #fff; }
.tr { display: flex; align-items: center; justify-content: center; }
.tr54 { width: 54px; }
.tr57 { width: 57px; }
.tr30 { width: 30px; }
.tr46 { width: 46px; }
.tr88 { width: 88px; }
.tr56 { width: 56px; }
.tray-text { font-size: 14.500px; }
.tray-q { font: bold 17px "Liberation Sans", sans-serif; fill: #fff; text-anchor: middle; }
.clock { flex-direction: column; font-size: 14.500px; line-height: 23px; }

/* dialog window */
.dialog { position: absolute; left: 434px; top: 0; width: 572px; height: 759px; background: #f0f0f0; border: 1px solid #a8a8a8; display: flex; flex-direction: column; box-shadow: 0 4px 14px rgba(0,0,0,.28); font-size: 16px; color: #111; }
.dlg-title { height: 37px; flex: none; background: #fff; display: flex; align-items: center; padding-left: 9px; }
.dlg-title-text { margin-left: 6px; font-size: 14px; color: #8a8a8a; }
.dlg-close { margin-left: auto; margin-right: 13px; }
.dlg-body { flex: 1; min-height: 0; display: flex; }
.dlg-scroll { width: 550px; overflow: hidden; padding-left: 2px; }
.fs { margin: 0 0 6px; padding: 0 8px; width: 545px; border: 1px solid #d8d8d8; }
.fs legend { margin-left: 0; padding: 0 2px; line-height: 24px; height: 24px; }
.desc { padding: 8px 0 7px; line-height: 21px; }
.desc p { margin: 0 0 21px; white-space: nowrap; }
.desc p:last-child { margin-bottom: 0; }
.desc .indent { padding-left: 16px; }
.desc .wide { letter-spacing: .18px; }
.desc .tight { letter-spacing: -.05px; }
.fs-params { padding-bottom: 20px; }
.combo-row { display: flex; align-items: center; padding: 0 2px; }
.row-sine { height: 26px; margin-top: 11px; }
.row-time { height: 27px; margin-top: 11px; }
.lbl-sine { width: 83px; flex: none; }
.lbl-time { width: 74px; flex: none; }
.combo { flex: 1; height: 100%; background: #e1e1e1; border: 1px solid #adadad; display: flex; align-items: center; padding: 0 5px 0 3px; justify-content: space-between; }
.param { padding: 0 2px; margin-top: 10.500px; }
.param label { display: block; line-height: 21px; height: 21px; margin-bottom: 7.500px; }
.param-field { display: flex; align-items: center; gap: 2px; }
.input { width: 504px; height: 27px; margin-left: 2px; background: #fff; border: 1px solid #7a7a7a; padding-left: 3px; line-height: 25px; }
.ell { width: 13px; height: 25px; background: #e9e9e9; border: 1px solid #bdbdbd; display: flex; flex-direction: column; align-items: center; justify-content: center; gap: 2px; }
.ell i { width: 2.500px; height: 2.500px; background: #222; }
.scrollbar { width: 20px; flex: none; display: flex; flex-direction: column; margin-left: auto; }
.sb-btn { height: 21px; flex: none; display: flex; align-items: center; justify-content: center; }
.sb-thumb { height: 526px; flex: none; background: #c9c9c9; }
.sb-rest { flex: 1; display: flex; flex-direction: column; justify-content: flex-end; align-items: center; padding-bottom: 8px; background: #f0f0f0; }
.dlg-foot { height: 48px; flex: none; display: flex; align-items: center; justify-content: space-between; padding: 6px 3px 0 9px; }
.dlg-btns { display: flex; gap: 10px; }
.btn { width: 90px; height: 28px; padding: 0; background: #e1e1e1; border: 1px solid #adadad; font: 16px "Noto Sans", sans-serif; color: #111; }
.btn-off { background: #cccccc; border-color: #bfbfbf; color: #7e7e7e; width: 91px; }
.help-q { font: bold 18px "Liberation Sans", sans-serif; fill: #e9eefb; text-anchor: middle; }

/* scope window */
.scope { position: absolute; left: 1061px; top: 64px; width: 702px; height: 629px; background: #fff; border: 1px solid #6f6f6f; border-top-color: #555; display: flex; flex-direction: column; box-shadow: 0 4px 16px rgba(0,0,0,.3); }
.sc-title { height: 38px; flex: none; display: flex; align-items: center; padding-left: 9px; }
.sc-title-text { margin-left: 5px; font-size: 15px; color: #111; }
.sc-ctl { margin-left: auto; margin-right: 1px; display: flex; }
.sc-btn { width: 58.500px; display: flex; justify-content: center; }
.sc-menu { height: 30px; flex: none; display: flex; align-items: center; gap: 16.500px; padding-left: 8px; font-size: 14.500px; border-bottom: 1px solid #a8a8a8; }
.sc-dock { margin-left: auto; margin-right: 3px; }
.sc-tools { height: 34px; flex: none; background: #f0f0f0; border-bottom: 1px solid #a8a8a8; display: flex; align-items: center; padding: 0 0 3px 3px; }
.tb { width: 28px; height: 24px; display: flex; align-items: center; justify-content: center; flex: none; }
.tb-first { width: 24px; }
.tb-ruler { margin-left: 2px; }
.tbc { display: flex; justify-content: center; }
.tbc17 { width: 17px; }
.tbc16 { width: 16px; }
.tbc14 { width: 14px; }
.tb-sep { width: 1px; height: 26px; background: #a8a8a8; margin: 0 5px 0 1px; flex: none; }
.sc-plot { height: 495px; flex: none; background: #282828; }
.grid path { stroke: #6a6a6a; stroke-width: 1; fill: none; }
.axbox { fill: none; stroke: #b8b8b8; }
.ylab text { font: 13px "Liberation Sans", sans-serif; fill: #a6a6a6; text-anchor: end; }
.xlab text { font: 13px "Liberation Sans", sans-serif; fill: #a6a6a6; text-anchor: middle; }
.sc-status { flex: 1; background: #f0f0f0; display: flex; align-items: center; padding: 1px 2px 0 1px; font: 13px "Noto Sans", sans-serif; color: #111; }
.sc-cell { height: 22px; border: 1px solid #c0c0c0; display: flex; align-items: center; padding-left: 2px; font-size: 13px; white-space: nowrap; }
.cell-a { width: 94px; margin-left: auto; }
.cell-b { width: 65px; margin-left: 3px; }
```
